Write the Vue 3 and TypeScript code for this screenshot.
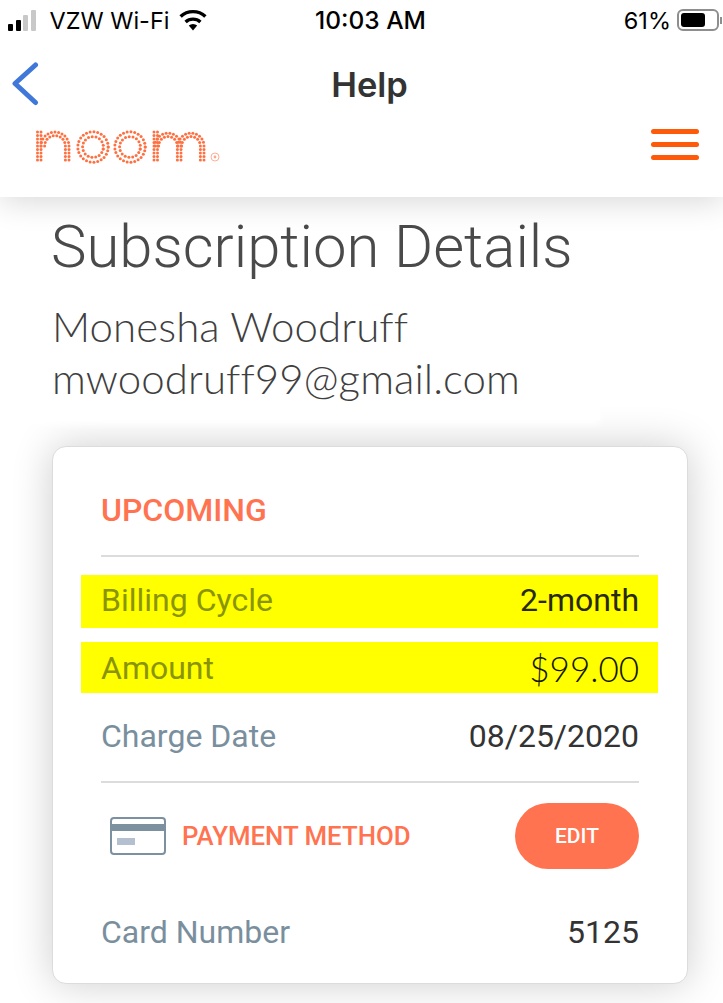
<script setup lang="ts">
type Dot = { x: number; y: number }

const STEP = 3.5

function stem(x: number, y0: number, y1: number): Dot[] {
  const dots: Dot[] = []
  for (let y = y0; y <= y1 + 0.01; y += STEP) dots.push({ x, y })
  return dots
}

function arc(cx: number, cy: number, r: number, from: number, to: number): Dot[] {
  const count = Math.round((Math.abs(to - from) * r) / 3.8)
  const dots: Dot[] = []
  for (let i = 0; i <= count; i++) {
    const a = from + ((to - from) * i) / count
    dots.push({ x: cx + r * Math.cos(a), y: cy + r * Math.sin(a) })
  }
  return dots
}

function hump(cx: number, r: number): Dot[] {
  return [
    ...arc(cx, 26, r, Math.PI, 2 * Math.PI),
    ...arc(cx, 26, r - 3.6, Math.PI, 2 * Math.PI),
    ...stem(cx + r, 29.5, 43),
    ...stem(cx + r - 3.6, 29.5, 43)
  ]
}

function ring(cx: number): Dot[] {
  return [...arc(cx, 27, 15.2, 0, 2 * Math.PI), ...arc(cx, 27, 10.4, 0.2, 0.2 + 2 * Math.PI)]
}

// logo coordinates: origin at page (20,120)
const logoDots: Dot[] = [
  ...stem(17.5, 12, 43),
  ...stem(21, 12, 43),
  ...hump(35, 14),
  ...ring(73),
  ...ring(110),
  ...stem(134, 12, 43),
  ...stem(137.5, 12, 43),
  ...hump(148, 13),
  ...hump(171, 13)
]

const upcoming = [
  { label: 'Billing Cycle', value: '2-month', cls: 'marked first' },
  { label: 'Amount', value: '$99.00', cls: 'marked second' },
  { label: 'Charge Date', value: '08/25/2020', cls: '' }
]
</script>

<template>
  <div class="page">
    <header class="top">
      <div class="status">
        <div class="status-left">
          <span class="signal"><i></i><i></i><i class="off"></i><i class="off"></i></span>
          <span>VZW Wi-Fi</span>
          <svg class="wifi" width="30" height="22" viewBox="0 0 30 22">
            <path d="M15 21.5 L10.8 16.6 A6.4 6.4 0 0 1 19.2 16.6 Z" fill="#000" />
            <path d="M7.6 13 A11 11 0 0 1 22.4 13" fill="none" stroke="#000" stroke-width="3.4" />
            <path d="M2.6 7.6 A18 18 0 0 1 27.4 7.6" fill="none" stroke="#000" stroke-width="3.4" />
          </svg>
        </div>
        <span class="time">10:03 AM</span>
        <div class="status-right">
          <span>61%</span>
          <span class="battery"><b></b></span>
          <span class="battery-tip"></span>
        </div>
      </div>
      <div class="nav">
        <svg class="back" width="28" height="44" viewBox="0 0 28 44">
          <path d="M23.5 3 L3 21.5 L23.5 40.5" fill="none" stroke="#3f78d8" stroke-width="5" stroke-linecap="round" stroke-linejoin="round" />
        </svg>
        <span class="nav-title">Help</span>
      </div>
      <div class="brand">
        <svg class="logo" width="210" height="50" viewBox="0 0 210 50">
          <circle v-for="(d, i) in logoDots" :key="i" :cx="d.x" :cy="d.y" r="1.5" fill="#ff7040" />
          <circle cx="195" cy="37" r="4" fill="none" stroke="#ffa78c" stroke-width="0.9" />
          <circle cx="195" cy="37" r="1.4" fill="#ffa78c" />
        </svg>
        <span class="burger"><i></i><i></i><i></i></span>
      </div>
    </header>

    <main class="content">
      <h1>Subscription Details</h1>
      <div class="who-block">
        <p class="who">Monesha Woodruff</p>
        <p class="who">mwoodruff99@gmail.com</p>
      </div>

      <section class="card">
        <h2>UPCOMING</h2>
        <div class="rows">
          <div v-for="row in upcoming" :key="row.label" class="row" :class="row.cls">
            <span class="label">{{ row.label }}</span>
            <span class="value">{{ row.value }}</span>
          </div>
        </div>
        <div class="payment">
          <svg class="card-icon" width="56" height="38" viewBox="0 0 56 38">
            <rect x="1" y="1" width="54" height="36" rx="3" fill="#fff" stroke="#7d90a0" stroke-width="2" />
            <rect x="1" y="7" width="54" height="7" fill="#7d90a0" />
            <rect x="7" y="21" width="18" height="7" fill="#b4c0cf" />
          </svg>
          <span class="pay-title">PAYMENT METHOD</span>
          <button class="edit">EDIT</button>
        </div>
        <div class="row">
          <span class="label">Card Number</span>
          <span class="value">5125</span>
        </div>
      </section>
    </main>
  </div>
</template>

<style>
html,
body {
  margin: 0;
  background: #fff;
}
</style>

<style scoped>
.page {
  width: 723px;
  height: 1003px;
  overflow: hidden;
  background: #fff;
  font-family: Roboto, sans-serif;
}

.top {
  height: 197px;
  background: #fff;
  box-shadow: 0 4px 30px rgba(0, 0, 0, 0.16);
  position: relative;
  z-index: 2;
}

.status {
  height: 40px;
  display: grid;
  grid-template-columns: 1fr auto 1fr;
  align-items: center;
  font-family: Inter, sans-serif;
  font-size: 23.5px;
  color: #000;
  padding: 0 0 0 8px;
}

.status-left {
  display: flex;
  align-items: center;
  gap: 9px;
}

.status-left > span:nth-child(2) {
  margin-left: 5px;
}

.signal {
  display: flex;
  align-items: flex-end;
  gap: 2.5px;
  height: 21px;
}

.signal i {
  width: 5px;
  background: #000;
  border-radius: 1px;
}

.signal i:nth-child(1) { height: 7px; }
.signal i:nth-child(2) { height: 11px; }
.signal i:nth-child(3) { height: 16px; }
.signal i:nth-child(4) { height: 21px; }
.signal i.off { background: #c8c8c8; }

.time {
  margin-left: 10px;
  font-size: 24.5px;
  font-weight: 500;
}

.status-right {
  display: flex;
  align-items: center;
  justify-content: flex-end;
}

.battery {
  box-sizing: border-box;
  width: 42px;
  height: 22px;
  margin-left: 6px;
  border: 2px solid #8e8e8e;
  border-radius: 6px;
  padding: 2px;
  display: flex;
}

.battery b {
  width: 24px;
  background: #000;
  border-radius: 3px;
}

.battery-tip {
  width: 2px;
  height: 7px;
  background: #8e8e8e;
  margin: 0 1px 0 1px;
}

.nav {
  height: 82px;
  box-sizing: border-box;
  padding: 6px 0 0 16px;
  position: relative;
  display: flex;
  align-items: center;
  justify-content: center;
}

.back {
  position: absolute;
  left: 12px;
  top: 22px;
}

.nav-title {
  font-family: Inter, sans-serif;
  font-size: 34.5px;
  font-weight: 600;
  color: #333;
}

.brand {
  height: 50px;
  margin-top: -2px;
  display: flex;
  align-items: center;
  justify-content: space-between;
  padding: 0 24px 0 20px;
}

.logo {
  display: block;
}

.burger {
  display: flex;
  flex-direction: column;
  gap: 8px;
  margin-top: -1px;
}

.burger i {
  display: block;
  width: 48px;
  height: 5px;
  border-radius: 3px;
  background: #ff5a0a;
}

.content {
  padding: 15px 35px 0 52px;
}

h1 {
  margin: 0 0 18px -1px;
  font-size: 59.8px;
  line-height: 70px;
  font-weight: 300;
  color: #4a4a4a;
}

.who-block {
  position: relative;
  z-index: 1;
  width: 548px;
  margin-left: -27px;
  padding: 0 0 16px 27px;
  background: #fff;
  box-shadow: 0 4px 8px #fff;
}

.who {
  margin: 0;
  font-family: Lato, sans-serif;
  font-size: 42px;
  line-height: 52px;
  font-weight: 300;
  color: #3f3f3f;
  letter-spacing: 0.08px;
  white-space: nowrap;
}

.card {
  margin-top: 26px;
  box-sizing: border-box;
  width: 636px;
  height: 538px;
  padding: 40px 48px 0;
  background: #fff;
  border: 1px solid #dcdcdc;
  border-radius: 14px;
  box-shadow: 0 0 40px rgba(0, 0, 0, 0.2);
}

h2 {
  margin: 0;
  height: 68px;
  font-size: 32px;
  line-height: 46px;
  font-weight: 500;
  color: #ff7350;
  border-bottom: 2px solid #dcdcdc;
}

.rows {
  padding-top: 18px;
  height: 206px;
  border-bottom: 2px solid #dcdcdc;
}

.row {
  height: 52px;
  display: flex;
  align-items: center;
  justify-content: space-between;
  font-size: 32px;
}

.row.marked {
  background: #ffff00;
  margin-left: -20px;
  margin-right: -19px;
  padding: 0 19px 0 20px;
}

.row.first {
  box-sizing: border-box;
  height: 53px;
  margin-bottom: 14px;
  padding-bottom: 3px;
}

.row.second {
  height: 51px;
  margin-bottom: 17px;
}

.second .value {
  font-family: Lato, sans-serif;
  font-size: 35px;
  font-weight: 300;
}

.label {
  color: #7a8f9e;
}

.value {
  color: #333;
}

.marked .label {
  color: #8a9400;
}

.marked .value {
  color: #2a2a00;
}

.second.marked .value {
  color: #141400;
}

.payment {
  display: flex;
  align-items: center;
  height: 66px;
  margin: 20px 0 37px;
  padding-left: 9px;
}

.pay-title {
  margin-left: 16px;
  font-size: 25.8px;
  font-weight: 500;
  color: #ff7350;
  flex: 1;
}

.edit {
  width: 124px;
  height: 66px;
  border: 0;
  border-radius: 33px;
  background: #ff7350;
  color: #fff;
  font-family: Roboto, sans-serif;
  font-size: 21px;
  font-weight: 500;
}
</style>
